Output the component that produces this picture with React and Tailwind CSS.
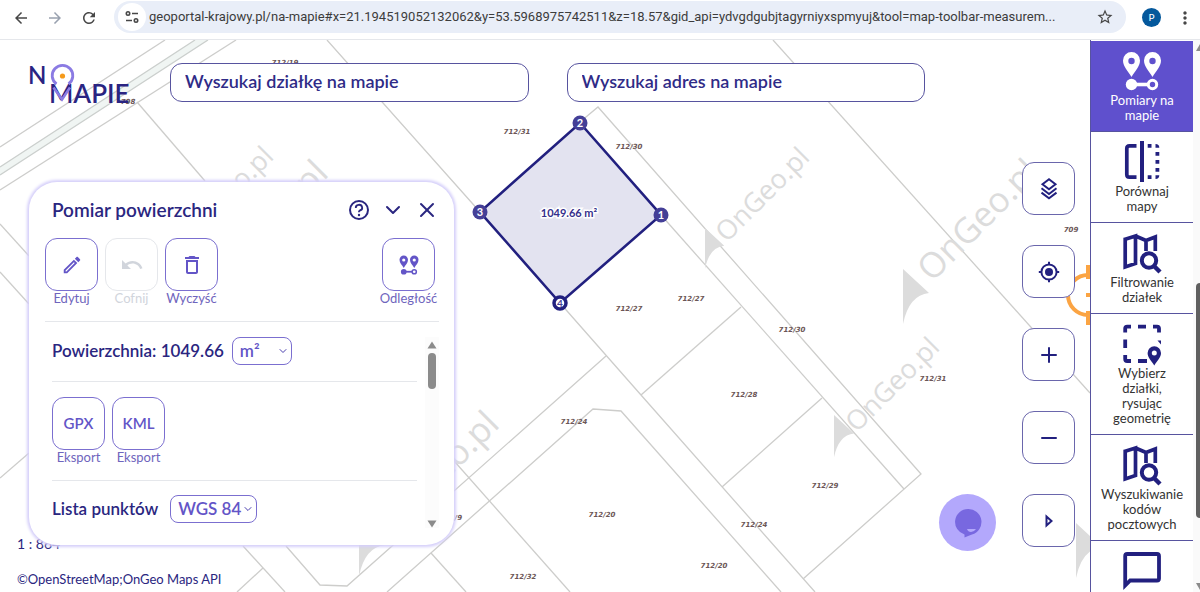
import React, { useState } from 'react';
import { MdArrowBack, MdArrowForward, MdRefresh, MdStarBorder, MdMoreVert, MdOutlineEdit, MdDeleteOutline } from 'react-icons/md';
import { ChevronDown, X, Plus, Minus } from 'lucide-react';

const URL_TEXT = 'geoportal-krajowy.pl/na-mapie#x=21.194519052132062&y=53.5968975742511&z=18.57&gid_api=ydvgdgubjtagyrniyxspmyuj&tool=map-toolbar-measurem...';

const parcelLines = [
  'M165 40 L0 147',
  'M236 40 L0 190',
  'M137 102 L205 181',
  'M327 40 L480 212 L560 303 L641 395 L815 592',
  'M580 122 L598 107 L921 474 L803 579',
  'M661 215 L904 489',
  'M741 307 L641 395',
  'M822 398 L722 487',
  'M606 356 L347 586 L320 585 L286 546',
  'M387 592 L593 409 L621 411 L781 592',
  'M455 462 L570 592',
  'M431 553 L466 592',
  'M243 546 L285 592',
  'M263 568 L237 592',
  'M773 40 L1090 393',
  'M0 224 L29 256',
  'M0 272 L29 304',
  'M0 478 L29 453',
];

const parcelLabels = [
  { text: '712/19', x: 285, y: 65 },
  { text: '708', x: 128, y: 104 },
  { text: '712/31', x: 517, y: 134 },
  { text: '712/30', x: 629, y: 149 },
  { text: '712/27', x: 629, y: 311 },
  { text: '712/27', x: 691, y: 301 },
  { text: '712/30', x: 792, y: 332 },
  { text: '712/31', x: 933, y: 381 },
  { text: '712/28', x: 744, y: 397 },
  { text: '712/24', x: 574, y: 424 },
  { text: '712/29', x: 825, y: 488 },
  { text: '712/20', x: 602, y: 517 },
  { text: '712/24', x: 754, y: 527 },
  { text: '712/20', x: 714, y: 568 },
  { text: '712/32', x: 523, y: 579 },
  { text: '712/9', x: 451, y: 520 },
  { text: '709', x: 1071, y: 232 },
];

const watermarks = [
  { x: 275, y: 158, size: 27 },
  { x: 330, y: 175, size: 35 },
  { x: 811, y: 159, size: 27 },
  { x: 1041, y: 174, size: 35 },
  { x: 941, y: 349, size: 27 },
  { x: 501, y: 426, size: 35 },
];

const arrows = [
  { x: 705, y: 228, s: 0.74 },
  { x: 903, y: 269, s: 1 },
  { x: 834, y: 415, s: 0.77 },
  { x: 359, y: 521, s: 1 },
  { x: 1076, y: 523, s: 1 },
];

const vertices = [
  { id: 1, x: 661, y: 215 },
  { id: 2, x: 580, y: 123 },
  { id: 3, x: 480, y: 212 },
];

const PinsIcon = ({ className, hole }) => (
  <svg viewBox="0 0 44 44" className={className} fill="currentColor">
    <path d="M11.5 28 C8 22 3 17.500 3 11.500 A8.500 8.500 0 0 1 20 11.500 C20 17.500 15 22 11.500 28Z" />
    <path d="M32.500 28 C29 22 24 17.500 24 11.500 A8.500 8.500 0 0 1 41 11.500 C41 17.500 36 22 32.500 28Z" />
    <circle cx="11.5" cy="12" r="3.2" fill={hole} />
    <circle cx="32.5" cy="12" r="3.2" fill={hole} />
    <circle cx="11.5" cy="35.5" r="5.7" />
    <circle cx="32.5" cy="35.5" r="4.2" fill="none" stroke="currentColor" strokeWidth="3" />
    <path d="M12 35.500 H28" stroke="currentColor" strokeWidth="3.6" />
  </svg>
);

const CompareIcon = () => (
  <svg viewBox="0 0 44 44" className="size-11" fill="currentColor">
    <path d="M16.500 5.800 H9.500 Q6.800 5.800 6.800 8.500 V34.500 Q6.800 37.200 9.500 37.200 H16.500" fill="none" stroke="currentColor" strokeWidth="3.7" />
    <path d="M20 1 H24 V42 H20Z M27.700 4 H31.500 V7.700 H27.700Z M27.700 35.300 H31.500 V39 H27.700Z" />
    <path d="M35.500 4 Q39.300 4 39.300 7.700 H35.500Z M35.500 12 H39.300 V15.800 H35.500Z M35.500 20 H39.300 V23.800 H35.500Z M35.500 28 H39.300 V31.800 H35.500Z M35.500 35.300 H39.300 Q39.300 39 35.500 39Z" />
  </svg>
);

const MapSearchIcon = () => (
  <svg viewBox="0 0 44 44" className="size-11" fill="none" stroke="currentColor" strokeWidth="3.7">
    <path d="M5.200 8.200 L15.500 5 V32.500 L5.200 36Z M15.500 5 L26 9.500 L35.300 6 V20 M26 9.500 V20" />
    <circle cx="29" cy="29.500" r="7.200" strokeWidth="4" />
    <path d="M34 35 L40 41" strokeWidth="4.4" />
  </svg>
);

const SelectAreaIcon = () => (
  <svg viewBox="0 0 44 44" className="size-11" fill="none" stroke="currentColor" strokeWidth="3.8">
    <path d="M5.200 10.500 V6.600 Q5.200 4.600 7.200 4.600 H11 M18 4.600 H26 M33 4.600 H37 Q39 4.600 39 6.600 V10.500 M5.200 17.500 V26 M5.200 33 V37 Q5.200 39 7.200 39 H11 M18 39 H27" />
    <path d="M37.500 18.500 L41 18.500 V22.500Z" fill="currentColor" stroke="none" />
    <path d="M34.300 43.500 C31.500 39 27.600 35.500 27.600 31 A6.700 6.700 0 0 1 41 31 C41 35.500 37 39 34.300 43.500Z" fill="currentColor" stroke="none" />
    <circle cx="34.300" cy="31" r="2.500" fill="white" stroke="none" />
  </svg>
);

const CommentIcon = () => (
  <svg viewBox="0 0 44 44" className="size-11" fill="none" stroke="currentColor" strokeWidth="3.8">
    <path d="M5.200 36.500 V7 Q5.200 5 7.200 5 H37 Q39 5 39 7 V29.500 Q39 31.500 37 31.500 H10.200Z" />
  </svg>
);

const LayersIcon = () => (
  <svg viewBox="0 0 24 24" className="size-6" fill="none" stroke="currentColor" strokeWidth="2">
    <path d="M12 2.200 L18.500 7.200 L12 12.200 L5.500 7.200Z M4.500 11.300 L12 17 L19.500 11.300 M4.500 15.600 L12 21.300 L19.500 15.600" />
  </svg>
);

const LocateIcon = () => (
  <svg viewBox="0 0 24 24" className="size-6" fill="none" stroke="currentColor" strokeWidth="2">
    <circle cx="12" cy="12" r="7.600" />
    <circle cx="12" cy="12" r="4" fill="currentColor" stroke="none" />
    <path d="M12 1.800 V5 M12 19 V22.200 M1.800 12 H5 M19 12 H22.200" />
  </svg>
);

const HelpIcon = () => (
  <svg viewBox="0 0 24 24" className="size-6" fill="none" stroke="currentColor" strokeWidth="2">
    <circle cx="12" cy="12" r="9" />
    <path d="M8.800 10 A3.200 2.900 0 1 1 12.800 12.500 Q11.900 13 11.900 14.300" strokeWidth="1.800" />
    <circle cx="12" cy="17" r="1.200" fill="currentColor" stroke="none" />
  </svg>
);

const UndoIcon = () => (
  <svg viewBox="0 0 24 24" className="size-6" fill="currentColor">
    <path d="M12.500 8c-2.650 0-5.050.99-6.900 2.600L2 7v9h9l-3.620-3.620c1.390-1.160 3.160-1.880 5.120-1.880 3.540 0 6.550 2.310 7.600 5.500l2.370-.78C21.080 11.030 17.150 8 12.500 8z" />
  </svg>
);

const PlayIcon = () => (
  <svg viewBox="0 0 24 24" className="size-6" fill="none" stroke="currentColor" strokeWidth="2">
    <path d="M9.500 7.500 V16.500 L14.500 12Z" />
  </svg>
);

const sideItems = [
  { id: 'measure', label: 'Pomiary na mapie', icon: <PinsIcon className="size-11" hole="#5f50cd" /> },
  { id: 'compare', label: 'Porównaj mapy', icon: <CompareIcon /> },
  { id: 'filter', label: 'Filtrowanie działek', icon: <MapSearchIcon /> },
  { id: 'draw', label: 'Wybierz działki,\nrysując geometrię', icon: <SelectAreaIcon /> },
  { id: 'postal', label: 'Wyszukiwanie kodów pocztowych', icon: <MapSearchIcon /> },
  { id: 'comment', icon: <CommentIcon /> },
];

const mapTools = [
  { id: 'Warstwy', icon: <LayersIcon /> },
  { id: 'Moja lokalizacja', icon: <LocateIcon /> },
  { id: 'Przybliż', icon: <Plus className="size-6" /> },
  { id: 'Oddal', icon: <Minus className="size-6" /> },
  { id: 'Rozwiń', icon: <PlayIcon /> },
];

// Browser bar
const BrowserBar = () => (
  <header className="flex h-10 shrink-0 items-start border-b border-gray-200 bg-white pr-1 text-[#474747]">
    <div className="flex h-[35px] items-center gap-4 pl-3">
      <button aria-label="Wstecz"><MdArrowBack className="size-[18px]" /></button>
      <button aria-label="Dalej" className="text-gray-400"><MdArrowForward className="size-[18px]" /></button>
      <button aria-label="Odśwież"><MdRefresh className="size-[18px]" /></button>
    </div>
    <div className="ml-4 mt-px flex h-8 flex-1 items-center rounded-full bg-[#e9eef8] pl-1 pr-3">
      <span className="flex size-7 items-center justify-center rounded-full bg-white">
        <svg viewBox="0 0 16 16" className="size-4" fill="none" stroke="currentColor" strokeWidth="1.600">
          <circle cx="4" cy="4.500" r="1.700" />
          <path d="M8 4.500 H14 M2 11.500 H8" />
          <circle cx="12" cy="11.500" r="1.700" />
        </svg>
      </span>
      <input aria-label="Adres" defaultValue={URL_TEXT} className="ml-[3px] min-w-0 flex-1 bg-transparent font-[Roboto,sans-serif] text-[13px] text-[#3c3c3c] outline-none" />
      <button aria-label="Dodaj zakładkę" className="ml-3"><MdStarBorder className="size-[18px]" /></button>
    </div>
    <div className="flex h-[35px] items-center pr-px">
      <span className="ml-4 flex size-[19px] items-center justify-center rounded-full bg-[#04589c] text-[10px] text-white">P</span>
      <button aria-label="Menu" className="ml-[14px]"><MdMoreVert className="size-5" /></button>
    </div>
  </header>
);

// Parcel map with the measured area
const ParcelMap = () => (
  <svg viewBox="0 40 1090 552" preserveAspectRatio="xMinYMin slice" className="absolute inset-0 size-full">
    <path d="M195 40 L0 167 V175 L208 40Z" fill="#f0f5f3" />
    <path d="M195 40 L0 167 M208 40 L0 175" stroke="#cbcfcd" strokeWidth="1.300" />
    <g fill="none" stroke="#cdcdcb" strokeWidth="1.300">
      {parcelLines.map(d => <path key={d} d={d} />)}
    </g>
    <g fill="#dcdcdc" className="font-['Open_Sans',sans-serif]">
      {watermarks.map(w => (
        <text key={w.x} fontSize={w.size} textAnchor="end" transform={`translate(${w.x} ${w.y}) rotate(-45)`}>OnGeo.pl</text>
      ))}
      {arrows.map(a => (
        <path key={a.x} d="M0 0 L26 24 Q6 26 0 55Z" transform={`translate(${a.x} ${a.y}) scale(${a.s})`} />
      ))}
    </g>
    <g fill="#6b5656" fontSize="7" fontWeight="700" fontStyle="italic" textAnchor="middle" className="font-['DejaVu_Sans',sans-serif]">
      {parcelLabels.map(l => <text key={`${l.x}-${l.y}`} x={l.x} y={l.y}>{l.text}</text>)}
    </g>
    <g fill="none" stroke="#fba443" strokeWidth="4">
      <circle cx="1088" cy="295" r="20" />
      <path d="M1088 265 V279 M1088 311 V325 M1086 295 H1090" />
    </g>
    <path d="M580 123 L661 215 L560 303 L480 212Z" fill="#e3e3f0" stroke="#22207f" strokeWidth="2.600" />
    {vertices.map(v => (
      <g key={v.id}>
        <circle cx={v.x} cy={v.y} r="7.500" fill="#443f97" />
        <text x={v.x} y={v.y + 4} fill="white" fontSize="11" fontWeight="700" textAnchor="middle" className="font-[Lato,sans-serif]">{v.id}</text>
      </g>
    ))}
    <circle cx="560" cy="303" r="6" fill="white" stroke="#22207f" strokeWidth="3.500" />
    <text x="560" y="307" fill="#443f97" fontSize="10" fontWeight="700" textAnchor="middle" className="font-[Lato,sans-serif]">4</text>
    <text x="569" y="217" fill="#35308c" stroke="white" strokeWidth="3" paintOrder="stroke" fontSize="11" fontWeight="700" textAnchor="middle" className="font-[Lato,sans-serif]">1049.66 m²</text>
  </svg>
);

const Logo = () => (
  <svg viewBox="-1 -6 108 52" className="-mt-[6px] -mb-1 h-[52px] w-[108px] shrink-0 overflow-visible" fill="#2a2482" fontWeight="600">
    <text x="-2" y="21" fontSize="24">N</text>
    <text x="19" y="40" fontSize="26">MAPIE</text>
    <path d="M26.500 21 A10.300 10.300 0 1 1 38.500 21" fill="none" stroke="#8b7be3" strokeWidth="2.800" />
    <path d="M23.500 24.500 L32 36.500 L40 24.500" fill="none" stroke="#8b7be3" strokeWidth="2.600" />
    <circle cx="32.500" cy="13" r="2.600" fill="#f59a1b" />
  </svg>
);

const SearchBox = ({ label }) => (
  <input
    type="search"
    aria-label={label}
    placeholder={label}
    className="h-[39px] min-w-0 flex-1 rounded-xl border border-[#57539f] bg-white px-[14px] pb-[3px] text-[18px] font-semibold text-[#22207f] outline-none placeholder:text-[#2f2b87]"
  />
);

const ToolButton = ({ label, children, disabled }) => (
  <div className="flex w-[53px] flex-col items-center">
    <button
      aria-label={label}
      disabled={disabled}
      className="flex size-[53px] items-center justify-center rounded-xl border border-[#7b6fd0] bg-white text-[15px] font-semibold text-[#6355c7] disabled:border-gray-200 disabled:text-gray-300"
    >
      {children}
    </button>
    <span className={`text-[13px] leading-[14px] ${disabled ? 'text-gray-300' : 'text-[#6f65bd]'}`}>{label}</span>
  </div>
);

const UnitSelect = ({ label, options, className }) => {
  const [value, setValue] = useState(options[0]);

  return (
    <div className={`relative ${className}`}>
      <select
        aria-label={label}
        value={value}
        onChange={e => setValue(e.target.value)}
        className="h-7 w-full appearance-none rounded-lg border border-[#7b6fd0] bg-white pl-[7px] text-[17px] leading-6 font-semibold text-[#6355c7] outline-none"
      >
        {options.map(o => <option key={o}>{o}</option>)}
      </select>
      <ChevronDown className="pointer-events-none absolute top-2 right-[3px] size-3 text-[#4a3fae]" />
    </div>
  );
};

const MeasurePanel = () => (
  <section className="w-[425px] rounded-[28px] bg-white pt-4 pr-[15px] pb-[17px] pl-4 text-[#2a2680] shadow-[0_0_3px_2px_#d5cffa]">
    <div className="flex h-6 items-center pl-[7px]">
      <h2 className="flex-1 text-[19px] font-semibold">Pomiar powierzchni</h2>
      <div className="flex gap-[10px]">
        <button aria-label="Pomoc"><HelpIcon /></button>
        <button aria-label="Zwiń"><ChevronDown className="size-6" /></button>
        <button aria-label="Zamknij"><X className="size-6" /></button>
      </div>
    </div>
    <div className="mt-4 flex gap-[7px] border-b border-gray-200 pr-1 pb-4">
      <ToolButton label="Edytuj"><MdOutlineEdit className="size-[22px]" /></ToolButton>
      <ToolButton label="Cofnij" disabled><UndoIcon /></ToolButton>
      <ToolButton label="Wyczyść"><MdDeleteOutline className="size-6" /></ToolButton>
      <div className="flex-1" />
      <ToolButton label="Odległość"><PinsIcon className="size-[22px]" hole="white" /></ToolButton>
    </div>
    <div className="mt-[15px] flex items-stretch">
      <div className="flex-1 pr-2 pb-[5px] pl-[7px]">
        <div className="flex items-center gap-2 border-b border-gray-200 pb-4 text-[17px] leading-7 font-semibold">
          <span>Powierzchnia: 1049.66</span>
          <UnitSelect label="Jednostka" options={['m²', 'ha', 'km²']} className="w-[60px]" />
        </div>
        <div className="flex gap-[7px] border-b border-gray-200 pt-[15px] pb-4">
          <ToolButton label="Eksport">GPX</ToolButton>
          <ToolButton label="Eksport">KML</ToolButton>
        </div>
        <div className="flex items-center gap-3 pt-[14px] text-[17px] leading-7 font-semibold">
          <span>Lista punktów</span>
          <UnitSelect label="Układ współrzędnych" options={['WGS 84', 'PUWG 1992']} className="w-[87px]" />
        </div>
      </div>
      <div className="flex w-[14px] flex-col items-center bg-[#fcfcfc] pt-1 text-[#8b8b8b]">
        <svg viewBox="0 0 10 8" className="h-2 w-[10px]" fill="currentColor"><path d="M5 0.500 L9.500 7.500 H0.500Z" /></svg>
        <div className="mt-1 h-9 w-2 rounded-full bg-[#8b8b8b]" />
        <div className="flex-1" />
        <svg viewBox="0 0 10 8" className="h-2 w-[10px]" fill="currentColor"><path d="M5 7.500 L9.500 0.500 H0.500Z" /></svg>
      </div>
    </div>
  </section>
);

const MapArea = () => (
  <main className="relative flex min-w-0 flex-1 overflow-hidden bg-white">
    <ParcelMap />
    <div className="absolute bottom-1 left-[17px] text-[#2a2680]">
      <p className="text-[14px] leading-[18px]">1 : 864</p>
      <p className="mt-[17px] text-[13px] leading-[18px]">
        <a href="#osm">©OpenStreetMap</a>;<a href="#ongeo">OnGeo Maps API</a>
      </p>
    </div>
    <div className="relative flex flex-1 flex-col pt-[23px] pl-[29px]">
      <div className="flex pr-[71px]">
        <Logo />
        <div className="ml-[33px] flex flex-1 items-start gap-[38px]">
          <SearchBox label="Wyszukaj działkę na mapie" />
          <SearchBox label="Wyszukaj adres na mapie" />
        </div>
      </div>
      <div className="mt-[77px] flex items-end justify-between">
        <MeasurePanel />
        <button aria-label="Czat" className="-mb-[6px] flex size-[57px] items-center justify-center rounded-full bg-[#b3a8fc]">
          <svg viewBox="0 0 28 30" className="h-[30px] w-7">
            <path d="M14 1 A13 13 0 0 1 18 26.500 Q14 28 10.500 29.500 V26.500 A13 13 0 0 1 14 1Z" fill="#7868e0" />
            <path d="M13 21 H22 Q20 24 17 24 Q14 24 13 21Z" fill="#b3a8fc" />
          </svg>
        </button>
      </div>
    </div>
    <div className="relative flex flex-col gap-[30px] pt-[122px] pr-[15px] pl-[26px]">
      {mapTools.map(tool => (
        <button key={tool.id} aria-label={tool.id} className="flex size-[53px] items-center justify-center rounded-xl border border-[#6a66ac] bg-white text-[#22207f]">
          {tool.icon}
        </button>
      ))}
    </div>
  </main>
);

const SideMenu = () => {
  const [selected, setSelected] = useState('measure');

  return (
    <nav className="w-[103px] shrink-0 overflow-hidden border-l border-[#57539f] bg-white pt-px">
      {sideItems.map(item => (
        <button
          key={item.id}
          onClick={() => setSelected(item.id)}
          aria-label={item.label || 'Komentarz'}
          className={`flex w-full flex-col items-center border-b border-[#57539f] px-2 py-2 text-[13px] leading-[15px] ${selected === item.id ? 'bg-[#5f50cd] text-white' : 'text-[#22207f]'}`}
        >
          {item.icon}
          {item.label && (
            <span className={`whitespace-pre-line ${item.id === 'draw' ? 'w-[70px]' : ''} ${selected === item.id ? 'text-white' : 'text-[#333]'}`}>{item.label}</span>
          )}
        </button>
      ))}
    </nav>
  );
};

const App = () => {
  return (
    <div className="flex h-screen flex-col overflow-hidden bg-white font-[Lato,sans-serif]">
      <BrowserBar />
      <div className="flex min-h-0 flex-1">
        <MapArea />
        <SideMenu />
        <div className="flex w-[7px] shrink-0 flex-col overflow-hidden bg-[#fafafa]">
          <svg viewBox="0 0 7 12" className="h-3 w-[7px]" fill="#8b8b8b"><path d="M3 11 L7 4 V11Z" /></svg>
          <div className="flex-[232]" />
          <div className="ml-[3px] flex-[236] rounded-l bg-[#606060]" />
          <div className="flex-[62]" />
          <svg viewBox="0 0 7 12" className="h-3 w-[7px]" fill="#8b8b8b"><path d="M3 3 H7 V10Z" /></svg>
        </div>
      </div>
    </div>
  );
};

export default App;
